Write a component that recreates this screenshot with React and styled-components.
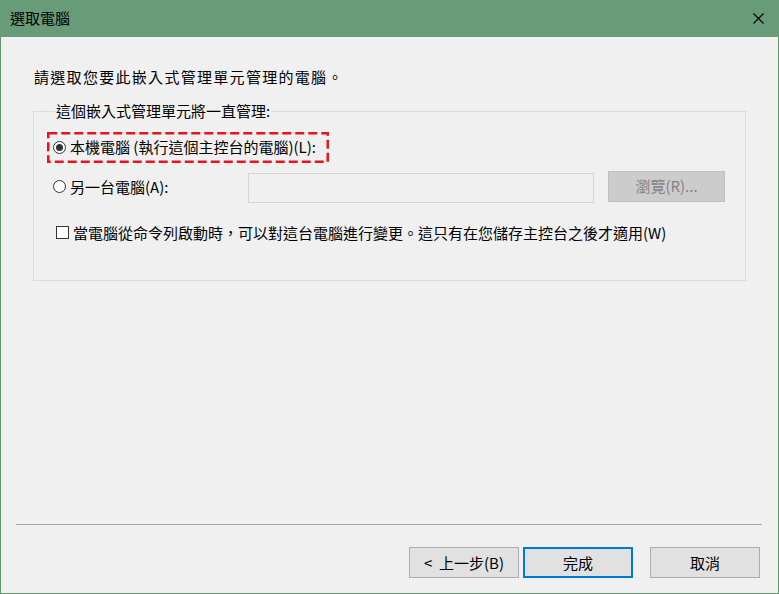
import React from "react";
import styled, { createGlobalStyle } from "styled-components";

const Global = createGlobalStyle`
  html, body { margin: 0; padding: 0; background: #f0f0f0; }
  body { font-family: "Noto Sans CJK TC", "Noto Sans", sans-serif; }
  * { box-sizing: border-box; }
`;

const FONT = `"Noto Sans CJK TC", "Noto Sans", sans-serif`;

const Window = styled.div`
  width: 779px;
  height: 594px;
  display: flex;
  flex-direction: column;
  border: 1px solid #5f9470;
  border-top: none;
  background: #f0f0f0;
  font-family: ${FONT};
  font-size: 15px;
  color: #000;
`;

const TitleBar = styled.div`
  height: 37px;
  flex: none;
  background: #689c78;
  display: flex;
  align-items: center;
  justify-content: space-between;
  margin: 0 -1px;
  padding: 0 15px 1px 10px;
`;

const Title = styled.span`
  font-size: 15px;
  line-height: 20px;
  color: #000;
`;

const CloseIcon = styled.svg`
  width: 11px;
  height: 11px;
  display: block;
`;

const Body = styled.div`
  flex: 1;
  display: flex;
  flex-direction: column;
  padding: 30px 32px 0 32px;
`;

const Instruction = styled.div`
  line-height: 20px;
  padding-left: 1px;
  letter-spacing: ${(p) => p.$spacing || 0}px;
`;

const Group = styled.fieldset`
  margin: 14px 0 0 0;
  padding: 0 0 32px 13px;
  border: 1px solid #dcdcdc;
  min-width: 0;
`;

const Legend = styled.legend`
  margin-left: 8px;
  padding: 0 1px;
  line-height: 20px;
  font-size: 15px;
`;

const Highlight = styled.div`
  position: relative;
  display: inline-flex;
  align-items: center;
  margin-top: 11px;
  width: 282px;
  height: 31px;
  padding-left: 6px;
  padding-bottom: 1px;
`;

const DashFrame = styled.svg`
  position: absolute;
  inset: 0;
  width: 100%;
  height: 100%;
  pointer-events: none;
  overflow: visible;
`;

const OptionRow = styled.div`
  display: flex;
  align-items: center;
  height: 31px;
  margin-top: ${(p) => p.$top || 0}px;
`;

const OptionLabel = styled.label`
  display: flex;
  align-items: center;
  gap: 4px;
  line-height: 20px;
  width: ${(p) => (p.$width ? `${p.$width}px` : "auto")};
  padding-left: ${(p) => p.$indent || 0}px;
  flex: none;
`;

const Radio = styled.span`
  width: 13px;
  height: 13px;
  border-radius: 50%;
  border: 1px solid #333;
  background: #fff;
  display: flex;
  align-items: center;
  justify-content: center;
  flex: none;
  &::after {
    content: "";
    width: 7px;
    height: 7px;
    border-radius: 50%;
    background: ${(p) => (p.$checked ? "#333" : "transparent")};
  }
`;

const Check = styled.span`
  width: 13px;
  height: 13px;
  border: 1px solid #333;
  background: #fff;
  flex: none;
`;

const TextBox = styled.div`
  width: 346px;
  height: 30px;
  border: 1px solid #d4d4d4;
  background: #f0f0f0;
  margin-top: 2px;
`;

const BrowseButton = styled.div`
  width: 117px;
  height: 31px;
  margin-left: 14px;
  margin-top: -1px;
  background: #cccccc;
  border: 1px solid #bfbfbf;
  color: #838383;
  display: flex;
  align-items: center;
  justify-content: center;
  line-height: 20px;
`;

const Spacer = styled.div`
  flex: 1;
`;

const Footer = styled.div`
  flex: none;
  display: flex;
  flex-direction: column;
  padding: 0 0 15px 0;
`;

const Separator = styled.div`
  height: 1px;
  background: #a5a5a5;
  margin: 0 16px 0 15px;
`;

const ButtonRow = styled.div`
  display: flex;
  justify-content: flex-end;
  padding-right: 18px;
  margin-top: 22px;
`;

const Button = styled.div`
  width: 110px;
  height: 31px;
  margin-left: ${(p) => p.$gap || 0}px;
  background: #e1e1e1;
  border: ${(p) => (p.$primary ? "2px solid #0078d7" : "1px solid #adadad")};
  display: flex;
  align-items: center;
  justify-content: center;
  line-height: 20px;
  font-size: 15px;
  white-space: pre;
`;

export default function App() {
  return (
    <>
      <Global />
      <Window>
        <TitleBar>
          <Title>選取電腦</Title>
          <CloseIcon viewBox="0 0 11 11">
            <path d="M0.5 0.5 L10.5 10.5 M10.5 0.5 L0.5 10.5" stroke="#000" strokeWidth="1.1" fill="none" />
          </CloseIcon>
        </TitleBar>
        <Body>
          <Instruction $spacing={1.3}>請選取您要此嵌入式管理單元管理的電腦。</Instruction>
          <Group>
            <Legend>這個嵌入式管理單元將一直管理:</Legend>
            <Highlight>
              <DashFrame>
                <rect x="1.25" y="1.25" width="279.5" height="28.5" fill="none" stroke="#e8141c" strokeWidth="2.5" strokeDasharray="9 4" />
              </DashFrame>
              <OptionLabel>
                <Radio $checked />
                本機電腦 (執行這個主控台的電腦)(L):
              </OptionLabel>
            </Highlight>
            <OptionRow $top={8}>
              <OptionLabel $width={201} $indent={6}>
                <Radio />
                另一台電腦(A):
              </OptionLabel>
              <TextBox />
              <BrowseButton>瀏覽(R)...</BrowseButton>
            </OptionRow>
            <OptionRow $top={15}>
              <OptionLabel $indent={9}>
                <Check />
                當電腦從命令列啟動時，可以對這台電腦進行變更。這只有在您儲存主控台之後才適用(W)
              </OptionLabel>
            </OptionRow>
          </Group>
          <Spacer />
        </Body>
        <Footer>
          <Separator />
          <ButtonRow>
            <Button>{"<  上一步(B)"}</Button>
            <Button $primary $gap={4}>完成</Button>
            <Button $gap={17}>取消</Button>
          </ButtonRow>
        </Footer>
      </Window>
    </>
  );
}
